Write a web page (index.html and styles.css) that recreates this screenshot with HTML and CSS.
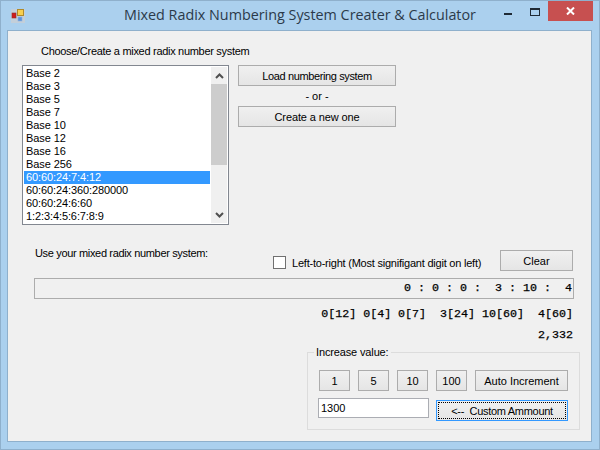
FILE: index.html
```html
<!DOCTYPE html>
<html lang="en">
<head>
    <meta charset="UTF-8">
    <meta name="viewport" content="width=device-width, initial-scale=1.0">
    <title>Mixed Radix Numbering System Creater &amp; Calculator</title>
    <link rel="stylesheet" href="styles.css">
</head>
<body>
    <div class="window">
        <div class="titlebar">
            <svg class="app-icon" width="14" height="14" viewBox="0 0 14 14">
                <rect x="0" y="0" width="14" height="14" fill="#c3cfda"/>
                <rect x="1" y="4" width="4" height="5" fill="#d01c1c" stroke="#8c3030" stroke-width="0.6"/>
                <rect x="6.5" y="0.5" width="6" height="6" fill="#f7cf4f" stroke="#b08a2a"/>
                <rect x="7" y="8" width="4" height="4" fill="#5b93dc" stroke="#8fb2dc" stroke-width="0.6"/>
            </svg>
            <div class="title">Mixed Radix Numbering System Creater &amp; Calculator</div>
            <div class="controls">
                <div class="ctl-min"></div>
                <div class="ctl-max"></div>
                <div class="ctl-close">
                    <svg width="9" height="8" viewBox="0 0 9 8">
                        <path d="M1 0.5 L8 7.5 M8 0.5 L1 7.5" stroke="#fff" stroke-width="2" fill="none"/>
                    </svg>
                </div>
            </div>
        </div>
        <div class="client">
            <div class="choose-label">Choose/Create a mixed radix number system</div>
            <div class="choose-row">
                <div class="listbox">
                    <ul class="items">
                        <li>Base 2</li>
                        <li>Base 3</li>
                        <li>Base 5</li>
                        <li>Base 7</li>
                        <li>Base 10</li>
                        <li>Base 12</li>
                        <li>Base 16</li>
                        <li>Base 256</li>
                        <li class="selected">60:60:24:7:4:12</li>
                        <li>60:60:24:360:280000</li>
                        <li>60:60:24:6:60</li>
                        <li>1:2:3:4:5:6:7:8:9</li>
                    </ul>
                    <div class="scrollbar">
                        <div class="arrow">
                            <svg width="9" height="6" viewBox="0 0 9 6"><path d="M1 5 L4.5 1.5 L8 5" stroke="#505050" stroke-width="2" fill="none"/></svg>
                        </div>
                        <div class="thumb"></div>
                        <div class="track"></div>
                        <div class="arrow">
                            <svg width="9" height="6" viewBox="0 0 9 6"><path d="M1 1 L4.5 4.5 L8 1" stroke="#505050" stroke-width="2" fill="none"/></svg>
                        </div>
                    </div>
                </div>
                <div class="choose-actions">
                    <button class="btn btn-wide btn-load">Load numbering system</button>
                    <div class="or">- or -</div>
                    <button class="btn btn-wide btn-create">Create a new one</button>
                </div>
            </div>
            <div class="use-row">
                <div class="use-label">Use your mixed radix number system:</div>
                <label class="ltr">
                    <input type="checkbox" class="check">
                    <span>Left-to-right (Most signifigant digit on left)</span>
                </label>
                <button class="btn btn-clear">Clear</button>
            </div>
            <div class="readout">0 : 0 : 0 :  3 : 10 :  4</div>
            <div class="digits">0[12] 0[4] 0[7]  3[24] 10[60]  4[60]</div>
            <div class="total">2,332</div>
            <div class="group">
                <div class="group-label">Increase value:</div>
                <div class="group-row">
                    <button class="btn btn-step">1</button>
                    <button class="btn btn-step">5</button>
                    <button class="btn btn-step">10</button>
                    <button class="btn btn-step">100</button>
                    <button class="btn btn-auto">Auto Increment</button>
                </div>
                <div class="group-row custom-row">
                    <input type="text" class="amount" value="1300">
                    <button class="btn btn-custom"><span class="focus-ring">&lt;--&nbsp; Custom Ammount</span></button>
                </div>
            </div>
        </div>
    </div>
</body>
</html>
```
FILE: styles.css
```css
html, body {
    margin: 0;
    height: 100%;
}
body {
    font-family: "Liberation Sans", Arial, sans-serif;
    font-size: 11px;
    color: #000;
    overflow: hidden;
}
.window {
    width: 600px;
    height: 450px;
    box-sizing: border-box;
    background: #abd0ee;
    border: 1px solid #8fb0cc;
    display: flex;
    flex-direction: column;
}
.titlebar {
    height: 29px;
    display: flex;
    align-items: flex-start;
    position: relative;
}
.app-icon {
    margin: 8px 0 0 10px;
}
.title {
    position: absolute;
    left: 0;
    right: 0;
    top: 4px;
    text-align: center;
    font-family: "Open Sans", "Noto Sans", sans-serif;
    font-size: 14.35px;
    line-height: 20px;
    color: #2b3a4a;
}
.controls {
    margin-left: auto;
    margin-right: 6px;
    display: flex;
    align-items: flex-start;
}
.ctl-min {
    width: 8px;
    height: 2px;
    background: #1f2a35;
    margin: 12px 18px 0 0;
}
.ctl-max {
    width: 8px;
    height: 5px;
    border: 1px solid #1f2a35;
    border-top-width: 2px;
    margin: 7px 8px 0 0;
}
.ctl-close {
    width: 45px;
    height: 20px;
    background: #c75050;
    display: flex;
    align-items: center;
    justify-content: center;
}
.client {
    flex: 1;
    margin: 0 7px 7px 6px;
    background: #f0f0f0;
    border: 1px solid #8fb0cc;
    display: flex;
    flex-direction: column;
}
.choose-label {
    margin: 14px 0 0 33px;
    line-height: 13px;
    letter-spacing: -0.3px;
}
.choose-row {
    display: flex;
    gap: 9px;
    margin: 7px 0 0 14px;
}
.listbox {
    width: 207px;
    height: 160px;
    box-sizing: border-box;
    background: #fff;
    border: 1px solid #828790;
    display: flex;
    padding: 1px;
}
.items {
    list-style: none;
    margin: 0;
    padding: 0;
    flex: 1;
    letter-spacing: -0.1px;
}
.items li {
    height: 13px;
    line-height: 13px;
    padding-left: 2px;
}
.items .selected {
    background: #3399ff;
    color: #fff;
}
.scrollbar {
    width: 16px;
    margin-left: 1px;
    display: flex;
    flex-direction: column;
    background: #f0f0f0;
}
.arrow {
    height: 17px;
    display: flex;
    align-items: center;
    justify-content: center;
}
.thumb {
    height: 81px;
    background: #cdcdcd;
}
.track {
    flex: 1;
}
.choose-actions {
    display: flex;
    flex-direction: column;
    width: 158px;
}
.or {
    height: 20px;
    line-height: 20px;
    text-align: center;
}
.btn {
    font-family: inherit;
    font-size: 11px;
    color: #000;
    height: 21px;
    padding: 0;
    box-sizing: border-box;
    border: 1px solid #acacac;
    border-radius: 0;
    background: linear-gradient(#f0f0f0, #e5e5e5);
}
.btn-wide {
    width: 158px;
}
.btn-load {
    letter-spacing: -0.38px;
}
.btn-create {
    letter-spacing: -0.12px;
}
.use-row {
    display: flex;
    align-items: flex-start;
    margin-top: 22px;
    height: 24px;
    padding-left: 27px;
}
.use-label {
    width: 238px;
    line-height: 13px;
    letter-spacing: -0.34px;
}
.ltr {
    display: flex;
    align-items: center;
    margin-top: 9px;
    height: 13px;
    width: 227px;
    letter-spacing: -0.22px;
}
.check {
    appearance: none;
    width: 13px;
    height: 13px;
    box-sizing: border-box;
    margin: 0 6px 0 0;
    background: #fff;
    border: 1px solid #707070;
}
.btn-clear {
    width: 73px;
    margin-top: 3px;
}
.readout {
    margin: 7px 0 0 26px;
    width: 540px;
    height: 21px;
    box-sizing: border-box;
    border: 1px solid #acacac;
    padding-right: 1px;
    text-align: right;
    white-space: pre;
    font-family: "Liberation Mono", monospace;
    font-size: 11.67px;
    line-height: 19px;
    -webkit-text-stroke: 0.25px #000;
}
.digits, .total {
    text-align: right;
    white-space: pre;
    margin-right: 18px;
    font-family: "Liberation Mono", monospace;
    font-size: 11.67px;
    line-height: 14px;
    -webkit-text-stroke: 0.25px #000;
}
.digits {
    margin-top: 8px;
}
.total {
    margin-top: 7px;
}
.group {
    position: relative;
    width: 273px;
    height: 78px;
    box-sizing: border-box;
    margin: 10px 0 0 299px;
    border: 1px solid #dcdcdc;
    padding: 17px 0 0 11px;
}
.group-label {
    position: absolute;
    left: 6px;
    top: -7px;
    padding: 0 2px;
    background: #f0f0f0;
    line-height: 13px;
    letter-spacing: -0.14px;
}
.group-row {
    display: flex;
    align-items: flex-start;
    gap: 8px;
}
.btn-step {
    width: 31px;
}
.btn-auto {
    width: 93px;
}
.custom-row {
    margin: 7px 0 0 -1px;
    gap: 7px;
}
.amount {
    width: 111px;
    height: 20px;
    box-sizing: border-box;
    margin: 0;
    padding: 0 2px;
    font-family: inherit;
    font-size: 11px;
    border: 1px solid #abadb3;
    background: #fff;
    outline: none;
}
.btn-custom {
    width: 132px;
    margin-top: 2px;
    border-color: #3399ff;
    padding: 1px;
    letter-spacing: -0.3px;
}
.focus-ring {
    display: flex;
    align-items: center;
    justify-content: center;
    height: 100%;
    border: 1px dotted #000;
    box-sizing: border-box;
}
```
